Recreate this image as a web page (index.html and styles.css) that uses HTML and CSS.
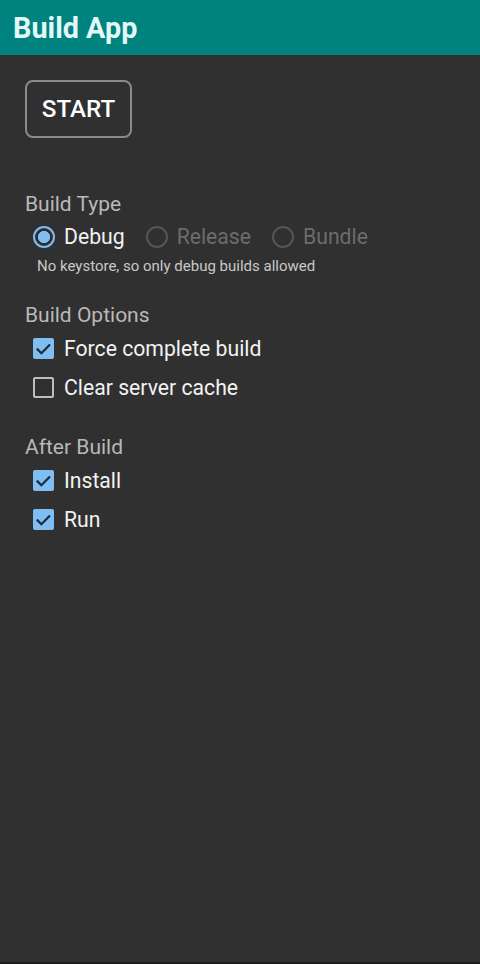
FILE: index.html
```html
<!DOCTYPE html>
<html>
<head>
<meta charset="utf-8">
<link rel="stylesheet" href="styles.css">
</head>
<body>
<div class="app">
  <header class="bar"><h1 class="title">Build App</h1></header>
  <main class="content">
    <button class="start">START</button>

    <section class="group group-type">
      <div class="label">Build Type</div>
      <div class="radios">
        <div class="radio on"><span class="rdot"></span><span>Debug</span></div>
        <div class="radio off"><span class="rdot"></span><span>Release</span></div>
        <div class="radio off"><span class="rdot"></span><span>Bundle</span></div>
      </div>
      <div class="note">No keystore, so only debug builds allowed</div>
    </section>

    <section class="group group-options">
      <div class="label">Build Options</div>
      <div class="check on"><span class="box"><svg viewBox="0 0 21 21"><path d="M3.8 10.6l4.6 4.6 8.6-8.8" fill="none" stroke="#1e2a35" stroke-width="2.2"/></svg></span><span>Force complete build</span></div>
      <div class="check"><span class="box"></span><span>Clear server cache</span></div>
    </section>

    <section class="group group-after">
      <div class="label">After Build</div>
      <div class="check on"><span class="box"><svg viewBox="0 0 21 21"><path d="M3.8 10.6l4.6 4.6 8.6-8.8" fill="none" stroke="#1e2a35" stroke-width="2.2"/></svg></span><span>Install</span></div>
      <div class="check on"><span class="box"><svg viewBox="0 0 21 21"><path d="M3.8 10.6l4.6 4.6 8.6-8.8" fill="none" stroke="#1e2a35" stroke-width="2.2"/></svg></span><span>Run</span></div>
    </section>
  </main>
</div>
</body>
</html>
```
FILE: styles.css
```css
html, body {
  margin: 0;
  padding: 0;
  height: 100%;
}
body {
  background: #1c1c1c;
  font-family: Roboto, "Noto Sans", sans-serif;
}
.app {
  height: 962px;
  background: #303030;
  display: flex;
  flex-direction: column;
}
.bar {
  background: #00827f;
  height: 55px;
  display: flex;
  align-items: center;
  padding-left: 13px;
  flex: none;
}
.title {
  margin: 0;
  color: #e3f8f8;
  font-size: 28.8px;
  font-weight: 700;
}
.content {
  padding: 25px 25px 0 25px;
  display: flex;
  flex-direction: column;
  align-items: flex-start;
}
.start {
  width: 107px;
  height: 58px;
  border: 2px solid #8a8a8a;
  border-radius: 8px;
  background: #303030;
  color: #ffffff;
  font-family: Roboto, sans-serif;
  font-size: 24.2px;
  font-weight: 500;
  padding: 0;
}
.group {
  display: flex;
  flex-direction: column;
  align-items: flex-start;
}
.group-type { margin-top: 53px; }
.group-options { margin-top: 27px; }
.group-after { margin-top: 27px; }
.label {
  color: #b9b9b9;
  font-size: 21px;
  line-height: 26px;
}
.radios {
  display: flex;
  gap: 21px;
  margin-top: 7px;
  margin-left: 8px;
}
.radio {
  display: flex;
  align-items: center;
  gap: 9px;
  font-size: 21.2px;
  line-height: 26px;
}
.radio.on { color: #f2f2f2; }
.radio.off { color: #6c6c6c; }
.rdot {
  width: 22px;
  height: 22px;
  border-radius: 50%;
  box-sizing: border-box;
  border: 2px solid #555555;
}
.radio.on .rdot {
  border: 2.5px solid #7fbef2;
  background: radial-gradient(circle, #7fbef2 0 5.8px, transparent 6.3px);
}
.note {
  color: #c8c8c8;
  font-size: 15px;
  line-height: 18px;
  margin-top: 7px;
  margin-left: 12px;
}
.label + .check { margin-top: 1px; }
.check {
  display: flex;
  align-items: center;
  gap: 10px;
  margin-left: 8px;
  font-size: 21.2px;
  line-height: 26px;
  color: #f2f2f2;
  height: 39px;
}
.box {
  width: 21px;
  height: 21px;
  box-sizing: border-box;
  border: 2px solid #bdbdbd;
  border-radius: 2px;
  display: flex;
  flex: none;
}
.check.on .box {
  background: #7fbef2;
  border: none;
}
.box svg { width: 21px; height: 21px; }
```
